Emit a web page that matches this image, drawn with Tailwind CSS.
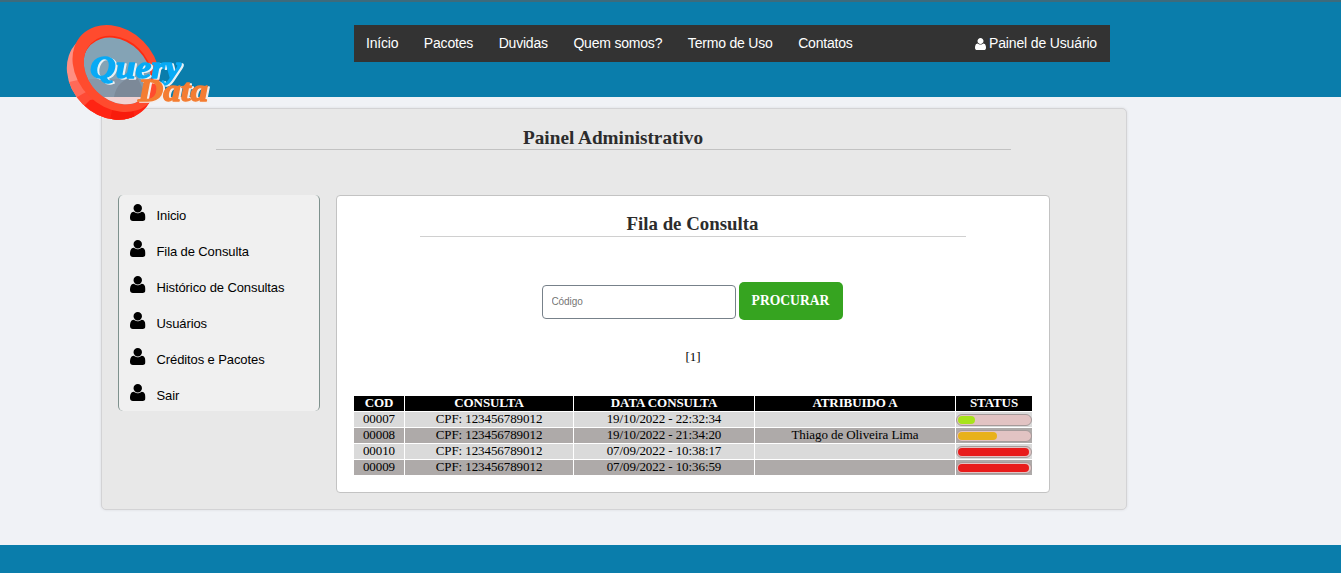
<!DOCTYPE html>
<html lang="pt-BR">
<head>
<meta charset="utf-8">
<title>Query Data</title>
<script src="https://cdn.jsdelivr.net/npm/@tailwindcss/browser@4"></script>
</head>
<body class="h-[573px] overflow-hidden bg-[#f0f2f6] font-['Liberation_Sans',sans-serif] text-black">
<svg class="hidden"><symbol id="user" viewBox="0 0 1408 1536"><path d="M1408 1277q0 120-73 189.500t-194 69.500h-874q-121 0-194-69.500t-73-189.500q0-53 3.500-103.500t14-109 26.500-108.500 43-97.500 62-81 85.500-53.500 111.500-20q9 0 42 21.500t74.500 48 108 48 133.500 21.500 133.500-21.500 108-48 74.500-48 42-21.500q61 0 111.500 20t85.500 53.500 62 81 43 97.500 26.500 108.500 14 109 3.500 103.500zm-320-893q0 159-112.500 271.500t-271.500 112.500-271.500-112.500-112.500-271.500 112.500-271.500 271.500-112.500 271.500 112.500 112.500 271.500z"/></symbol></svg>
<div class="flex h-full flex-col">
  <header class="relative h-[97px] shrink-0 border-t-2 border-[#3d6b7c] bg-[#0a7dab] pt-[23px] pl-[354px]">
    <nav class="flex h-[37px] w-[756px] items-center gap-[25.600px] bg-[#333333] pr-[13px] pl-3 text-[14px] tracking-[-0.2px] whitespace-nowrap text-white">
      <a>Início</a><a>Pacotes</a><a>Duvidas</a><a>Quem somos?</a><a>Termo de Uso</a><a>Contatos</a>
      <a class="ml-auto flex items-center gap-[3px] tracking-[-0.150px]"><svg class="h-[12px] w-[11px] fill-white"><use href="#user"/></svg>Painel de Usuário</a>
    </nav>
    <svg class="absolute top-[18px] left-[60px] z-10 h-[105px] w-[155px]" viewBox="60 20 155 105">
      <defs>
        <clipPath id="rim"><ellipse cx="110.500" cy="76" rx="47.500" ry="39.500" transform="rotate(45 110.500 76)"/></clipPath>
        <clipPath id="lens"><ellipse cx="118" cy="70" rx="38" ry="30" transform="rotate(45 118 70)"/></clipPath>
      </defs>
      <g clip-path="url(#rim)">
        <path d="M60 20h110v105H60z" fill="#ff8f82"/>
        <path d="M60 84l18-4 60 45H60z" fill="#ff6a58"/>
        <path d="M72 100l14-8 70 33H72z" fill="#ff4a34"/>
        <path d="M80 110l10-10 75-10v35H80z" fill="#ff2413"/>
        <path d="M113 105l20 4 2 12h-25z" fill="#f81b0c"/>
      </g>
      <ellipse cx="116" cy="68.500" rx="48" ry="38.500" transform="rotate(45 116 68.500)" fill="#ff4b2e"/>
      <g clip-path="url(#lens)">
        <path d="M60 20h110v105H60z" fill="#ff2b10"/>
        <ellipse cx="117" cy="71.500" rx="37.500" ry="30" transform="rotate(45 117 71.500)" fill="#84a3b5"/>
        <path d="M86 79h64v18H86z" fill="#8798a9"/>
        <path d="M114 97c2-12 9-19 23-20l10 20z" fill="#7c8998"/>
        <path d="M86 97h59v20H86z" fill="#f1d2d2"/>
      </g>
      <g class="font-['Liberation_Serif',serif] font-bold italic [filter:drop-shadow(2px_1px_0_#e9f1f5)]" stroke-linejoin="round">
        <text x="90" y="78" font-size="32" textLength="91" lengthAdjust="spacingAndGlyphs" fill="#08aaf5" stroke="#08aaf5" stroke-width="1.300">Query</text>
      </g>
      <g class="font-['Liberation_Serif',serif] font-bold italic [filter:drop-shadow(2px_1px_0_#f5eeea)]" stroke-linejoin="round">
        <text x="138" y="101" font-size="32" textLength="70" lengthAdjust="spacingAndGlyphs" fill="#f47d32" stroke="#f47d32" stroke-width="1.300">Data</text>
      </g>
    </svg>
  </header>

  <main class="mt-[11px] ml-[101px] h-[402px] w-[1026px] shrink-0 rounded-[5px] border border-[#d3d3d5] bg-[#e8e8e8] px-4 shadow-[0_0_3px_#00000018]">
    <div class="ml-[98px] flex h-[41px] w-[795px] items-end justify-center border-b border-[#c2c2c2]">
      <h1><svg class="block h-[25px] w-[182px]"><text x="0" y="19.500" textLength="180" lengthAdjust="spacingAndGlyphs" class="fill-[#2c2c2c] font-['Liberation_Serif',serif] text-[19px] font-bold">Painel Administrativo</text></svg></h1>
    </div>
    <div class="mt-[45px] flex items-start gap-4">
      <aside class="h-[216px] w-[202px] rounded-[5px] border-x border-[#7e918d] bg-[#f0f0f0] text-[13px] tracking-[-0.1px]">
        <a class="flex h-9 items-center pt-[5px] pl-[11px]"><svg class="mr-[11px] mb-1.5 h-[17px] w-[15.500px]"><use href="#user"/></svg>Inicio</a>
        <a class="flex h-9 items-center pt-[5px] pl-[11px]"><svg class="mr-[11px] mb-1.5 h-[17px] w-[15.500px]"><use href="#user"/></svg>Fila de Consulta</a>
        <a class="flex h-9 items-center pt-[5px] pl-[11px]"><svg class="mr-[11px] mb-1.5 h-[17px] w-[15.500px]"><use href="#user"/></svg>Histórico de Consultas</a>
        <a class="flex h-9 items-center pt-[5px] pl-[11px]"><svg class="mr-[11px] mb-1.5 h-[17px] w-[15.500px]"><use href="#user"/></svg>Usuários</a>
        <a class="flex h-9 items-center pt-[5px] pl-[11px]"><svg class="mr-[11px] mb-1.5 h-[17px] w-[15.500px]"><use href="#user"/></svg>Créditos e Pacotes</a>
        <a class="flex h-9 items-center pt-[5px] pl-[11px]"><svg class="mr-[11px] mb-1.5 h-[17px] w-[15.500px]"><use href="#user"/></svg>Sair</a>
      </aside>
      <section class="h-[298px] w-[714px] rounded-[4px] border border-[#c3c3c3] bg-white px-[17px] font-['Liberation_Serif',serif]">
        <div class="mx-auto flex h-[41px] w-[546px] items-end justify-center border-b border-[#d0d0d0]">
          <h2><svg class="block h-[25px] w-[134px]"><text x="0.500" y="19" textLength="132" lengthAdjust="spacingAndGlyphs" class="fill-[#2c2c2c] text-[19px] font-bold">Fila de Consulta</text></svg></h2>
        </div>
        <form class="mt-[45px] flex items-center justify-center gap-[3px] pr-[2px]">
          <input placeholder="Código" class="mt-0.5 h-[34px] w-[194px] rounded-[4px] border border-[#77818a] bg-white px-[9px] pb-px font-['Liberation_Sans',sans-serif] text-[10px] tracking-[-0.1px] placeholder:text-[#757575]">
          <button type="button" class="h-[38px] w-[104px] rounded-[5px] bg-[#36a420] pt-px text-[13.600px] font-bold text-white">PROCURAR</button>
        </form>
        <p class="mt-[28px] text-center text-[13px] leading-[18px]">[1]</p>
        <div class="mt-[30px] flex flex-col gap-px text-center text-[13px] leading-[13px] tracking-[-0.08px]">
          <div class="grid grid-cols-[50px_168px_180px_200px_76px] gap-px font-bold text-white *:h-[15px] *:bg-black"><b>COD</b><b>CONSULTA</b><b>DATA CONSULTA</b><b>ATRIBUIDO A</b><b>STATUS</b></div>
          <div class="grid grid-cols-[50px_168px_180px_200px_76px] gap-px *:h-[15px] *:bg-[#dadada]"><span>00007</span><span>CPF: 123456789012</span><span>19/10/2022 - 22:32:34</span><span></span><span class="pt-[2px]"><i class="flex h-[12px] rounded-full border border-[#a59a9a] bg-[#e2c3c3] p-px"><i class="w-[17px] rounded-full bg-[#a8e31b]"></i></i></span></div>
          <div class="grid grid-cols-[50px_168px_180px_200px_76px] gap-px *:h-[15px] *:bg-[#aeaaa9]"><span>00008</span><span>CPF: 123456789012</span><span>19/10/2022 - 21:34:20</span><span>Thiago de Oliveira Lima</span><span class="pt-[2px]"><i class="flex h-[12px] rounded-full border border-[#a59a9a] bg-[#e2c3c3] p-px"><i class="w-[39px] rounded-full bg-[#e8b11b]"></i></i></span></div>
          <div class="grid grid-cols-[50px_168px_180px_200px_76px] gap-px *:h-[15px] *:bg-[#dadada]"><span>00010</span><span>CPF: 123456789012</span><span>07/09/2022 - 10:38:17</span><span></span><span class="pt-[2px]"><i class="flex h-[12px] rounded-full border border-[#a59a9a] bg-[#e2c3c3] p-px"><i class="w-[71px] rounded-full bg-[#e81b1b]"></i></i></span></div>
          <div class="grid grid-cols-[50px_168px_180px_200px_76px] gap-px *:h-[15px] *:bg-[#aeaaa9]"><span>00009</span><span>CPF: 123456789012</span><span>07/09/2022 - 10:36:59</span><span></span><span class="pt-[2px]"><i class="flex h-[12px] rounded-full border border-[#a59a9a] bg-[#e2c3c3] p-px"><i class="w-[71px] rounded-full bg-[#e81b1b]"></i></i></span></div>
        </div>
      </section>
    </div>
  </main>
  <footer class="mt-auto h-7 shrink-0 bg-[#0a7dab]"></footer>
</div>
</body>
</html>
